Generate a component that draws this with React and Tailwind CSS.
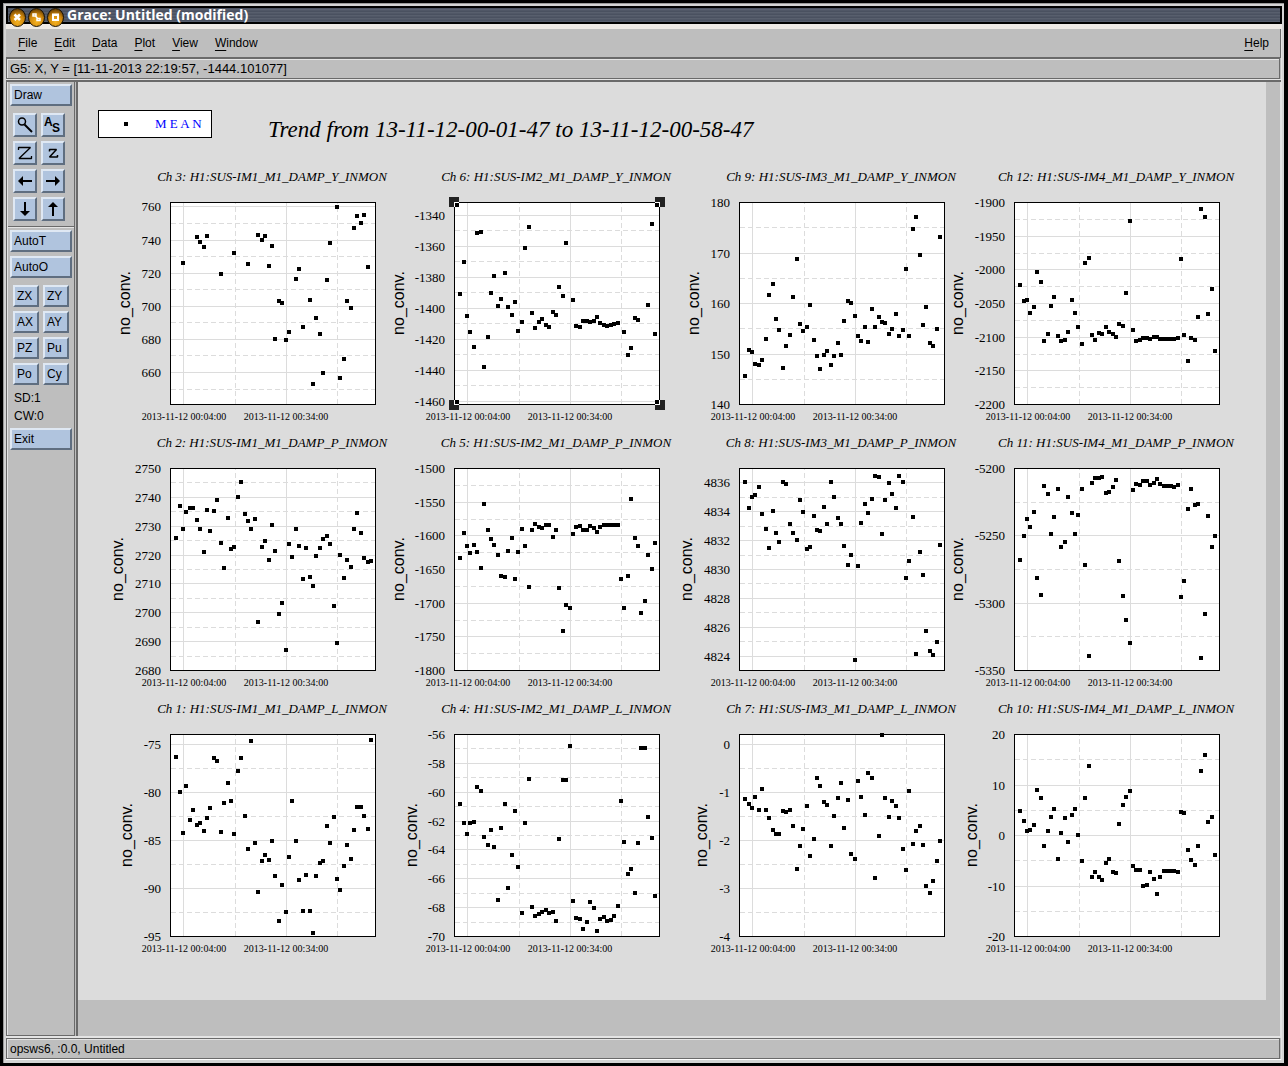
import { useState } from "react";

const MENUS = ["File", "Edit", "Data", "Plot", "View", "Window"];

const SANS = "font-['Liberation_Sans',sans-serif]";
const SERIF = "font-['Liberation_Serif',serif]";

const PLOT_W = 205;
const PLOT_H = 202;

// readings are one per minute, in raster units between frame[0] (top) and frame[1] (bottom)
const CHARTS = [
  {
    ch: 3, name: "H1:SUS-IM1_M1_DAMP_Y_INMON", max: 762.7, min: 640.7, step: 20, labelX: -40, frame: [110, 715],
    readings: {
      2: 291, 6: 213, 7: 227, 8: 243, 9: 210, 13: 325, 17: 261, 21: 294, 24: 207, 25: 222, 26: 210, 27: 300, 28: 241,
      29: 520, 30: 406, 31: 412, 32: 522, 33: 498, 35: 339, 36: 309, 37: 483, 39: 402, 40: 654, 41: 456, 42: 504,
      43: 621, 44: 342, 45: 231, 47: 123, 48: 636, 49: 579, 50: 405, 51: 426, 52: 186, 53: 150, 54: 171, 55: 147, 56: 303,
    },
  },
  {
    ch: 6, name: "H1:SUS-IM2_M1_DAMP_Y_INMON", max: -1331.6, min: -1462.1, step: 20, labelX: -50, frame: [110, 715], selected: true,
    readings: [
      384, 288, 450, 498, 543, 202, 198, 603, 513, 381, 330, 420, 398, 321, 423, 447, 408, 495, 468, 246,
      183, 441, 487, 469, 459, 477, 483, 438, 447, 364, 390, 231, null, 402, 480, 482, 465, 465, 468, 465,
      454, 471, 477, 480, 477, 474, 471, null, 498, 567, 546, 456, 462, null, null, 417, 174, 504,
    ],
  },
  {
    ch: 9, name: "H1:SUS-IM3_M1_DAMP_Y_INMON", max: 180, min: 140, step: 10, labelX: -40, frame: [110, 715],
    readings: [
      630, 553, 559, 594, 597, 583, 520, 387, 354, 460, 492, 606, 540, 507, 393, 280, 474, 496, 483, 417,
      522, 570, 609, 567, 556, 597, 570, 532, 567, 465, 405, 411, 450, 510, 525, 483, 528, 429, 483, 453,
      468, 472, 504, 489, 444, 510, 492, 309, 510, 190, 153, 267, 477, 423, 532, 540, 489, 213,
    ],
  },
  {
    ch: 12, name: "H1:SUS-IM4_M1_DAMP_Y_INMON", max: -1900, min: -2200, step: 50, labelX: -51, frame: [110, 715],
    readings: [
      357, 406, 402, 441, 423, 318, 348, 525, 504, 420, 393, 510, 525, 522, 498, 402, 441, 483, 534, 291,
      276, 507, 522, 502, 505, 484, 498, 504, 513, 474, 480, 382, 165, 492, 525, 522, 516, 516, 519, 513,
      513, 519, 519, 519, 519, 519, 516, 279, 507, 585, 516, 522, 453, 129, 153, 445, 369, 555,
    ],
  },
  {
    ch: 2, name: "H1:SUS-IM1_M1_DAMP_P_INMON", max: 2750, min: 2680, step: 10, labelX: -47, frame: [115, 720],
    readings: [
      324, 228, 297, 246, 234, 234, 270, 297, 366, 240, 303, 243, 210, 339, 414, 262, 357, 351, 201, 156,
      252, 273, 297, 267, 576, 351, 333, 389, 285, 363, 552, 519, 658, 342, 381, 297, 348, 447, 354, 441,
      468, 378, 352, 327, 318, 341, 528, 639, 375, 444, 390, 411, 297, 249, 309, 383, 396, 393,
    ],
  },
  {
    ch: 5, name: "H1:SUS-IM2_M1_DAMP_P_INMON", max: -1500, min: -1800, step: 50, labelX: -50, frame: [115, 720],
    readings: [
      384, 309, 348, 367, 343, 366, 414, 222, 298, 327, 345, 375, 438, 441, 363, 324, 447, 366, 297, 348,
      471, 300, 282, 291, 294, 285, 285, 321, 300, 474, 601, 525, 534, 312, 291, 288, 300, 300, 288, 294,
      306, 291, 285, 285, 285, 285, 285, 447, 534, 438, 207, 324, 348, 549, 513, 375, 417, 339,
    ],
  },
  {
    ch: 8, name: "H1:SUS-IM3_M1_DAMP_P_INMON", max: 4837, min: 4823, step: 2, labelX: -47, frame: [115, 720],
    readings: [
      156, 232, 201, 195, 171, 252, 295, 354, 243, 309, 336, 154, 162, 282, 309, 330, 210, 244, 355, 351,
      258, 300, 303, 231, 282, 156, 201, 264, 282, 348, 405, 375, 690, 408, 279, 222, 249, 207, 138, 141,
      310, 210, 159, 190, 234, 138, 156, 444, 393, 261, 672, 366, 435, 601, 663, 675, 634, 343,
    ],
  },
  {
    ch: 11, name: "H1:SUS-IM4_M1_DAMP_P_INMON", max: -5200, min: -5350, step: 50, labelX: -51, frame: [115, 720],
    readings: [
      390, 318, 267, 291, 246, 444, 495, 168, 192, 312, 261, 177, 351, 336, 201, 249, 310, 255, 177, 405,
      678, 159, 144, 144, 141, 189, 184, 171, 150, 393, 498, 570, 639, 180, 162, 165, 153, 153, 165, 159,
      147, 162, 168, 168, 168, 171, 165, 501, 453, 237, 177, 225, 222, 682, 552, 258, 351, 318,
    ],
  },
  {
    ch: 1, name: "H1:SUS-IM1_M1_DAMP_L_INMON", max: -74, min: -95, step: 5, labelX: -38, frame: [118, 724],
    readings: [
      186, 291, 414, 273, 375, 345, 390, 384, 408, 369, 339, 187, 198, 411, 324, 264, 318, 417, 228, 189,
      363, 462, 138, 444, 591, 498, 478, 495, 438, 542, 678, 570, 651, 486, 318, 438, 555, 648, 540, 646,
      714, 543, 504, 498, 393, 444, 366, 552, 585, 512, 450, 492, 405, 336, 336, 363, 402, 133,
    ],
  },
  {
    ch: 4, name: "H1:SUS-IM2_M1_DAMP_L_INMON", max: -56, min: -70, step: 2, labelX: -37, frame: [118, 724],
    readings: [
      327, 384, 417, 384, 381, 276, 288, 426, 448, 405, 456, 615, 398, 327, 579, 480, 348, 516, 654, 384,
      252, 636, 662, 656, 650, 645, 654, 651, 678, 432, 255, 255, 153, 618, 669, 672, 702, 681, 621, 639,
      708, 672, 666, 678, 675, 663, 633, 318, 441, 537, 520, 594, 444, 159, 159, 366, 429, 603,
    ],
  },
  {
    ch: 7, name: "H1:SUS-IM3_M1_DAMP_L_INMON", max: 0.2, min: -4, step: 1, labelX: -32, frame: [118, 724],
    readings: [
      312, 327, 339, 306, 345, 282, 345, 369, 405, 415, 415, 348, 351, 345, 393, 522, 451, 402, 331, 483,
      432, 249, 273, 321, 330, 453, 363, 309, 264, 399, 315, 477, 492, 258, 306, 360, 234, 249, 549, 423,
      120, 309, 366, 318, 333, 369, 462, 525, 288, 447, 408, 393, 450, 573, 594, 558, 498, 438,
    ],
  },
  {
    ch: 10, name: "H1:SUS-IM4_M1_DAMP_L_INMON", max: 20, min: -20, step: 10, labelX: -37, frame: [118, 724],
    readings: [
      348, 378, 408, 405, 390, 285, 309, 451, 408, 366, 342, 492, 414, 369, 441, 360, 342, 420, 498, 309,
      213, 546, 531, 546, 555, 504, 492, 531, 534, 387, 330, 306, 288, 513, 525, 525, 573, 570, 531, 552,
      595, 546, 526, 528, 526, 528, 531, 351, 352, 465, 495, 510, 453, 228, 180, 381, 366, 480,
    ],
  },
];

const getTicks = (min, max, step) => {
  const ticks = [];
  for (let v = Math.floor(max / step) * step; v >= min; v -= step) {
    ticks.push(v);
  }
  return ticks;
};

const Chart = ({ ch, name, min, max, step, labelX, frame, readings, selected }) => {
  const yOf = (v) => Math.round(((max - v) / (max - min)) * PLOT_H) + 0.5;
  const major = getTicks(min, max, step);
  const minor = getTicks(min, max, step / 2).filter((v) => !major.includes(v));

  return (
    <svg
      width="275"
      height="266"
      viewBox="-60 -35 275 266"
      className="overflow-visible"
      role="img"
      aria-label={`Ch ${ch}`}
      shapeRendering="crispEdges"
    >
      <text x="102" y="-21" textAnchor="middle" className={`${SERIF} text-[13px] italic`}>
        Ch {ch}: {name}
      </text>
      <rect x="0.5" y="0.5" width={PLOT_W} height={PLOT_H} fill="#fff" />
      <g stroke="#dcdcdc">
        {major.map((v) => (
          <line key={v} x1="1" x2={PLOT_W} y1={yOf(v)} y2={yOf(v)} />
        ))}
        <line x1="13.5" x2="13.5" y1="1" y2={PLOT_H} />
        <line x1="116.5" x2="116.5" y1="1" y2={PLOT_H} />
        <g strokeDasharray="5 3">
          {minor.map((v) => (
            <line key={v} x1="1" x2={PLOT_W} y1={yOf(v)} y2={yOf(v)} />
          ))}
          <line x1="65.5" x2="65.5" y1={PLOT_H} y2="1" />
          <line x1="167.5" x2="167.5" y1={PLOT_H} y2="1" />
        </g>
      </g>
      <rect x="0.5" y="0.5" width={PLOT_W} height={PLOT_H} fill="none" stroke="#000" />
      {Object.entries(readings).map(([minute, r]) => {
        if (r === null) return null;
        const cx = Math.round(6.2 + Number(minute) * 3.42);
        const cy = Math.round(((r - frame[0]) / (frame[1] - frame[0])) * PLOT_H + 0.5);
        return <rect key={minute} x={cx - 2} y={cy - 2} width="4" height="4" />;
      })}
      {major.map((v) => (
        <text key={v} x="-9" y={yOf(v) + 4} textAnchor="end" className={`${SERIF} text-[13px]`}>
          {v}
        </text>
      ))}
      <text x="14" y="218" textAnchor="middle" className={`${SERIF} text-[10px]`}>
        2013-11-12 00:04:00
      </text>
      <text x="116" y="218" textAnchor="middle" className={`${SERIF} text-[10px]`}>
        2013-11-12 00:34:00
      </text>
      <text transform={`translate(${labelX} 101) rotate(-90)`} textAnchor="middle" className={`${SANS} text-[16px]`}>
        no_conv.
      </text>
      {selected &&
        [[0, 0, 1, 1], [205, 0, -1, 1], [0, 202, 1, -1], [205, 202, -1, -1]].map(([x, y, sx, sy]) => (
          <g key={`${x}-${y}`} transform={`translate(${x + 0.5} ${y + 0.5}) scale(${sx} ${sy})`}>
            <rect x="-5.5" y="-5.5" width="10" height="10" fill="#222" />
            <path d="M0 4.5V0H4.5" fill="none" stroke="#fff" />
            <rect x="0.5" y="0.5" width="4" height="4" />
          </g>
        ))}
    </svg>
  );
};

const bevel =
  "bg-[#b0c4de] border-2 border-t-[#dfe8f3] border-l-[#dfe8f3] border-b-[#5f6e80] border-r-[#5f6e80] active:bg-[#9db3cf]";

const WideButton = ({ children, className = "" }) => (
  <button className={`${bevel} h-[22px] w-full text-left px-[2px] leading-[18px] ${className}`}>{children}</button>
);

const IconButton = ({ label, children }) => (
  <button aria-label={label} className={`${bevel} size-6 flex items-center justify-center`}>
    <svg width="20" height="20" viewBox="0 0 20 20" className="shrink-0">
      {children}
    </svg>
  </button>
);

const ArrowIcon = ({ angle }) => (
  <g transform={`rotate(${angle} 10 10)`}>
    <path d="M5 10H17" stroke="#000" strokeWidth="2" />
    <path d="M3 10L8 5V15Z" />
  </g>
);

const WindowButton = ({ label, children }) => (
  <button aria-label={label} className="w-[17px] h-[19px]">
    <svg width="17" height="19" viewBox="0 0 17 19">
      <defs>
        <radialGradient id={`gold-${label}`} cx="0.5" cy="0.75" r="0.7">
          <stop offset="0" stopColor="#f5b221" />
          <stop offset="0.6" stopColor="#cf870c" />
          <stop offset="1" stopColor="#6e4303" />
        </radialGradient>
      </defs>
      <ellipse cx="8.5" cy="9.5" rx="8" ry="9" fill={`url(#gold-${label})`} stroke="#1a1204" />
      <g fill="none" stroke="#fff" strokeWidth="2">
        {children}
      </g>
    </svg>
  </button>
);

const TitleBar = () => (
  <header className="h-[18px] border-2 border-black flex items-center bg-[repeating-linear-gradient(#4a5160_0_1px,#585f6d_1px_2px,#505766_2px_3px)]">
    <div className="relative z-10 flex gap-[2px] pl-px pt-[5px]">
      <WindowButton label="close">
        <path d="M5.5 6.5L11 12M11 6.5L5.5 12" strokeWidth="2.5" />
      </WindowButton>
      <WindowButton label="iconify">
        <path d="M5 6H8V8H5ZM9 10.5H12V12.5H9ZM7.5 8L10 11" strokeWidth="1.5" />
      </WindowButton>
      <WindowButton label="maximize">
        <path d="M6 7V12H11V7Z" />
        <path d="M5 6.5H12" />
      </WindowButton>
    </div>
    <h1 className="pl-[3px] text-white font-bold text-[14px] leading-[14px] font-['Open_Sans',sans-serif]">
      Grace: Untitled (modified)
    </h1>
  </header>
);

const MenuItem = ({ children }) => (
  <button className="leading-4">
    <span className="underline underline-offset-[3px]">{children[0]}</span>
    {children.slice(1)}
  </button>
);

const ToolBar = () => (
  <aside className="w-[69px] shrink-0 mr-px border border-[#6a6a6a] border-t-0">
    <div className="h-full border-l border-[#e4e4e4]">
      <div className="px-[2px] pt-[2px]">
        <WideButton>Draw</WideButton>
        <div className="grid grid-cols-[24px_24px] gap-1 pl-[3px] pt-[7px] pb-[5px]">
          <IconButton label="Zoom">
            <circle cx="7" cy="6.5" r="3.5" fill="none" stroke="#000" strokeWidth="1.5" />
            <path d="M9.5 9.5L17 17" stroke="#000" strokeWidth="2" />
          </IconButton>
          <IconButton label="Autoscale">
            <text x="1" y="11" className={`${SANS} text-[12px] font-bold`}>A</text>
            <text x="9" y="17" className={`${SANS} text-[12px] font-bold`}>S</text>
          </IconButton>
          <IconButton label="Zoom in">
            <path d="M3.5 7V4.5H15.5L4 15.5H16.5V13" fill="none" stroke="#000" strokeWidth="1.3" strokeLinejoin="bevel" />
          </IconButton>
          <IconButton label="Zoom out">
            <path d="M6.5 8.5V6.5H13.5L6.5 14H14.5V12" fill="none" stroke="#000" strokeWidth="1.5" strokeLinejoin="bevel" />
          </IconButton>
          <IconButton label="Left"><ArrowIcon angle={0} /></IconButton>
          <IconButton label="Right"><ArrowIcon angle={180} /></IconButton>
          <IconButton label="Down"><ArrowIcon angle={270} /></IconButton>
          <IconButton label="Up"><ArrowIcon angle={90} /></IconButton>
        </div>
      </div>
      <div className="border-t border-t-[#6a6a6a] border-b border-b-[#e4e4e4]" />
      <div className="px-[2px] pt-[2px]">
        <WideButton>AutoT</WideButton>
        <WideButton className="mt-1">AutoO</WideButton>
        <div className="grid grid-cols-[26px_26px] gap-1 pl-[3px] pt-[7px]">
          {["ZX", "ZY", "AX", "AY", "PZ", "Pu", "Po", "Cy"].map((t) => (
            <button key={t} className={`${bevel} h-[22px] px-[2px] text-left leading-[18px]`}>{t}</button>
          ))}
        </div>
        <p className="pl-1 mt-1 leading-[18px]">SD:1</p>
        <p className="pl-1 mb-[3px] leading-[18px]">CW:0</p>
        <WideButton>Exit</WideButton>
      </div>
    </div>
  </aside>
);

const statusBar =
  "mr-px h-[21px] border border-[#6a6a6a] shadow-[inset_1px_1px_0_#e4e4e4] px-[3px] leading-[20px]";

const App = () => {
  const [locator] = useState("G5: X, Y = [11-11-2013 22:19:57, -1444.101077]");

  return (
    <div className={`${SANS} min-h-screen flex bg-black pt-[3px] pb-[3px] pl-[3px] pr-1 text-[12px] text-black`}>
      <div className="flex-1 flex flex-col bg-[#d4d4d4] border-t border-l border-[#9a9a9a] pt-[2px] pl-[2px] pr-[2px] pb-[3px]">
        <TitleBar />
        <div className="h-[5px] bg-[#eeeae6]" />
        <div className="flex-1 flex flex-col bg-[#bebebe] border-r border-r-[#e4e4e4]">
          <nav className="h-[28px] flex items-center gap-[17px] pl-3 pr-[11px] border-r border-[#6a6a6a]">
            {MENUS.map((m) => (
              <MenuItem key={m}>{m}</MenuItem>
            ))}
            <div className="ml-auto">
              <MenuItem>Help</MenuItem>
            </div>
          </nav>
          <div className="h-px bg-[#6a6a6a]" />
          <div className={`${statusBar} text-[13px]`}>{locator}</div>
          <div className="h-px bg-[#e4e4e4]" />
          <div className="h-[2px] bg-[#6a6a6a]" />
          <div className="flex-1 flex">
            <ToolBar />
            <main className="flex-1 flex border-l-2 border-l-[#6a6a6a] border-r border-r-[#e4e4e4] pr-[14px] pb-9">
              <div className="flex-1 bg-[#dcdcdc] pt-7">
                <div className="flex items-start pl-5">
                  <div className={`${SERIF} w-[114px] h-7 shrink-0 flex items-center border border-black bg-white pl-[25px] text-[13px] text-[#0000ff]`}>
                    <span className="size-1 bg-black mr-[27px]" />
                    M E A N
                  </div>
                  <h2 className={`${SERIF} pl-14 pt-[5px] text-[23px] leading-[30px] italic whitespace-nowrap`}>
                    Trend from 13-11-12-00-01-47 to 13-11-12-00-58-47
                  </h2>
                </div>
                <div className="grid grid-cols-[284px_285px_275px_275px] pl-8 pt-[22px]">
                  {CHARTS.map((chart) => (
                    <Chart key={chart.ch} {...chart} />
                  ))}
                </div>
              </div>
            </main>
          </div>
          <div className="h-[2px] bg-[#e4e4e4]" />
          <footer className={statusBar}>opsws6, :0.0, Untitled</footer>
          <div className="h-px bg-white" />
        </div>
      </div>
    </div>
  );
};

export default App;
